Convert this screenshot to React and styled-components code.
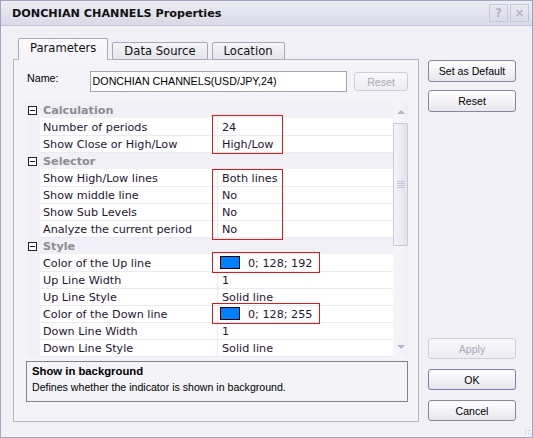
import React from 'react'
import styled, { createGlobalStyle, css } from 'styled-components'

const GlobalStyle = createGlobalStyle`
  html, body {
    margin: 0;
    padding: 0;
    background: #f0f0f6;
  }
  * { box-sizing: border-box; }
`

const Window = styled.div`
  width: 533px;
  height: 438px;
  border: 1px solid #a4a4c0;
  background: #f0f0f6;
  display: flex;
  flex-direction: column;
  position: relative;
  font-family: "DejaVu Sans", Verdana, sans-serif;
  color: #1e1433;
`

const TitleBar = styled.div`
  height: 25px;
  flex: none;
  display: flex;
  align-items: center;
  padding: 0 3px 0 11px;
  background: linear-gradient(#ededf5, #d9d9e7);
  border-bottom: 1px solid #c2c2d6;
`

const Title = styled.div`
  flex: 1;
  font-weight: bold;
  font-size: 11.2px;
  color: #111;
`

const TitleButtons = styled.div`
  display: flex;
  gap: 2px;
`

const TitleButton = styled.div`
  width: 19px;
  height: 18px;
  border: 1px solid #c6c6d6;
  background: linear-gradient(#e8e8f0, #dcdce8);
  color: #b4b4c4;
  font-weight: bold;
  font-size: 12px;
  display: flex;
  align-items: center;
  justify-content: center;
`

const Body = styled.div`
  flex: 1;
  display: flex;
  padding: 12px 0 0 12px;
`

const Main = styled.div`
  width: 406px;
  display: flex;
  flex-direction: column;
`

const Tabs = styled.div`
  height: 22px;
  margin-bottom: -1px;
  padding-left: 5px;
  display: flex;
  align-items: flex-end;
  gap: 4px;
  position: relative;
  z-index: 1;
`

const Tab = styled.div`
  height: ${p => (p.$active ? 22 : 18)}px;
  padding: 0 11px;
  display: flex;
  align-items: center;
  font-size: 11.6px;
  color: #111;
  border: 1px solid #a8a8b8;
  border-radius: 2px 2px 0 0;
  ${p =>
    p.$active
      ? css`
          border-bottom-color: #f3f3f8;
          background: linear-gradient(#fbfbfd, #f3f3f8);
          padding-bottom: 2px;
        `
      : css`
          background: linear-gradient(#f4f4f8, #e4e4ec);
        `}
`

const Panel = styled.div`
  height: 363px;
  border: 1px solid #b4b4c4;
  background: #f3f3f8;
  padding: 11px 10px 0 13px;
  display: flex;
  flex-direction: column;
`

const NameRow = styled.div`
  height: 21px;
  display: flex;
  align-items: center;
`

const NameLabel = styled.div`
  width: 63px;
  font-family: "Liberation Sans", Arial, sans-serif;
  font-size: 10.7px;
  color: #000;
  align-self: flex-start;
  padding-top: 1px;
`

const NameInput = styled.div`
  width: 259px;
  height: 21px;
  border: 1px solid #a5a5b0;
  background: #fff;
  font-family: "Liberation Sans", Arial, sans-serif;
  font-size: 10.7px;
  color: #000;
  padding: 3px 0 0 2px;
`

const Button = styled.div`
  width: ${p => p.$width || 88}px;
  height: ${p => p.$height || 21}px;
  border: 1px solid ${p => (p.$disabled ? '#cfcfdc' : p.$default ? '#7c7cb0' : '#86869e')};
  border-radius: 3px;
  background: ${p => (p.$disabled ? 'linear-gradient(#f8f8fb, #ececf2)' : 'linear-gradient(#ffffff, #e6e6ee)')};
  font-family: "Liberation Sans", Arial, sans-serif;
  font-size: 10.6px;
  color: ${p => (p.$disabled ? '#a8a8b8' : '#000')};
  display: flex;
  align-items: center;
  justify-content: center;
  flex: none;
`

const Grid = styled.div`
  margin-top: 9px;
  height: 256px;
  display: flex;
`

const GridBody = styled.div`
  flex: 1;
  position: relative;
  overflow: hidden;
`

const Row = styled.div`
  height: 17px;
  display: grid;
  grid-template-columns: 13px 177px 1fr;
  font-size: 11.2px;
  line-height: 15px;
  background: ${p => (p.$category ? '#f0f0f6' : '#fff')};
`

const Gutter = styled.div`
  background: #f0f0f6;
  display: flex;
  align-items: center;
  padding-left: 1px;
`

const Minus = styled.div`
  width: 9px;
  height: 9px;
  border: 1px solid #222;
  background: #fff;
  position: relative;
  &::after {
    content: '';
    position: absolute;
    left: 1px;
    right: 1px;
    top: 3px;
    height: 1px;
    background: #222;
  }
`

const NameCell = styled.div`
  padding: 2px 0 0 3px;
  white-space: nowrap;
  border-bottom: 1px solid ${p => (p.$category ? 'transparent' : '#eaeaf2')};
  ${p =>
    p.$category &&
    css`
      grid-column: 2 / 4;
      font-weight: bold;
      color: #8c8c90;
    `}
`

const ValueCell = styled.div`
  padding: 2px 0 0 4px;
  border-left: 1px solid #eaeaf2;
  border-bottom: 1px solid #eaeaf2;
  display: flex;
  align-items: center;
  white-space: nowrap;
  gap: 8px;
`

const Swatch = styled.span`
  width: 20px;
  height: 13px;
  border: 1px solid #000;
  background: ${p => p.$color};
  margin: -2px 0 0 -2px;
`

const Mark = styled.div`
  position: absolute;
  border: 1px solid #e01818;
  pointer-events: none;
`

const ScrollBar = styled.div`
  width: 15px;
  background: linear-gradient(90deg, #f6f6fa, #efeff5);
  display: flex;
  flex-direction: column;
  align-items: center;
`

const Arrow = styled.div`
  height: ${p => p.$h}px;
  display: flex;
  align-items: center;
  justify-content: center;
  flex: none;
  &::after {
    content: '';
    border-left: 4px solid transparent;
    border-right: 4px solid transparent;
    ${p => (p.$up ? 'border-bottom' : 'border-top')}: 4px solid #b4b4c8;
  }
`

const Thumb = styled.div`
  width: 15px;
  height: 123px;
  border: 1px solid #c8c8dc;
  border-radius: 1px;
  background: linear-gradient(90deg, #f4f4f9, #e2e2ee);
  display: flex;
  flex-direction: column;
  align-items: center;
  justify-content: center;
  gap: 1px;
`

const GripLine = styled.div`
  width: 8px;
  height: 1px;
  background: #c4c4d6;
`

const Track = styled.div`
  flex: 1;
`

const HelpBox = styled.div`
  margin: 4px 0 0 -1px;
  width: 382px;
  height: 41px;
  border: 1px solid #848488;
  padding: 2px 0 0 5px;
  font-family: "Liberation Sans", Arial, sans-serif;
  color: #000;
`

const HelpTitle = styled.div`
  font-weight: bold;
  font-size: 11.3px;
  line-height: 15px;
`

const HelpText = styled.div`
  font-size: 10.6px;
  line-height: 16px;
`

const Side = styled.div`
  width: 88px;
  margin-left: 9px;
  padding: 22px 0 16px;
  display: flex;
  flex-direction: column;
`

const ButtonGroup = styled.div`
  display: flex;
  flex-direction: column;
  gap: ${p => p.$gap}px;
  margin-top: ${p => (p.$bottom ? 'auto' : '0')};
`

const Grip = styled.div`
  position: absolute;
  right: 2px;
  bottom: 2px;
  width: 6px;
  height: 6px;
  background-image: radial-gradient(circle, #b8b8c8 0.8px, transparent 1px);
  background-size: 3px 3px;
`

const rows = [
  { category: 'Calculation' },
  { name: 'Number of periods', value: '24' },
  { name: 'Show Close or High/Low', value: 'High/Low' },
  { category: 'Selector' },
  { name: 'Show High/Low lines', value: 'Both lines' },
  { name: 'Show middle line', value: 'No' },
  { name: 'Show Sub Levels', value: 'No' },
  { name: 'Analyze the current period', value: 'No' },
  { category: 'Style' },
  { name: 'Color of the Up line', value: '0; 128; 192', color: '#0080ff' },
  { name: 'Up Line Width', value: '1' },
  { name: 'Up Line Style', value: 'Solid line' },
  { name: 'Color of the Down line', value: '0; 128; 255', color: '#0080ff' },
  { name: 'Down Line Width', value: '1' },
  { name: 'Down Line Style', value: 'Solid line' },
]

const marks = [
  { left: 185, top: 14, width: 71, height: 39 },
  { left: 185, top: 68, width: 71, height: 71 },
  { left: 185, top: 151, width: 108, height: 21 },
  { left: 185, top: 202, width: 108, height: 21 },
]

export default function App () {
  return (
    <>
      <GlobalStyle />
      <Window>
        <TitleBar>
          <Title>DONCHIAN CHANNELS Properties</Title>
          <TitleButtons>
            <TitleButton>?</TitleButton>
            <TitleButton>×</TitleButton>
          </TitleButtons>
        </TitleBar>
        <Body>
          <Main>
            <Tabs>
              <Tab $active>Parameters</Tab>
              <Tab>Data Source</Tab>
              <Tab>Location</Tab>
            </Tabs>
            <Panel>
              <NameRow>
                <NameLabel>Name:</NameLabel>
                <NameInput>DONCHIAN CHANNELS(USD/JPY,24)</NameInput>
                <Button $width={54} $height={19} $disabled style={{ marginLeft: 7 }}>Reset</Button>
              </NameRow>
              <Grid>
                <GridBody>
                  {rows.map((r, i) =>
                    r.category ? (
                      <Row key={i} $category>
                        <Gutter><Minus /></Gutter>
                        <NameCell $category>{r.category}</NameCell>
                      </Row>
                    ) : (
                      <Row key={i}>
                        <Gutter />
                        <NameCell>{r.name}</NameCell>
                        <ValueCell>
                          {r.color && <Swatch $color={r.color} />}
                          {r.value}
                        </ValueCell>
                      </Row>
                    )
                  )}
                  {marks.map((m, i) => (
                    <Mark key={i} style={m} />
                  ))}
                </GridBody>
                <ScrollBar>
                  <Arrow $up $h={22} />
                  <Thumb>
                    <GripLine />
                    <GripLine />
                    <GripLine />
                    <GripLine />
                  </Thumb>
                  <Track />
                  <Arrow $h={20} />
                </ScrollBar>
              </Grid>
              <HelpBox>
                <HelpTitle>Show in background</HelpTitle>
                <HelpText>Defines whether the indicator is shown in background.</HelpText>
              </HelpBox>
            </Panel>
          </Main>
          <Side>
            <ButtonGroup $gap={8}>
              <Button $height={22}>Set as Default</Button>
              <Button $height={22}>Reset</Button>
            </ButtonGroup>
            <ButtonGroup $gap={10} $bottom>
              <Button $disabled>Apply</Button>
              <Button $default>OK</Button>
              <Button>Cancel</Button>
            </ButtonGroup>
          </Side>
        </Body>
        <Grip />
      </Window>
    </>
  )
}
